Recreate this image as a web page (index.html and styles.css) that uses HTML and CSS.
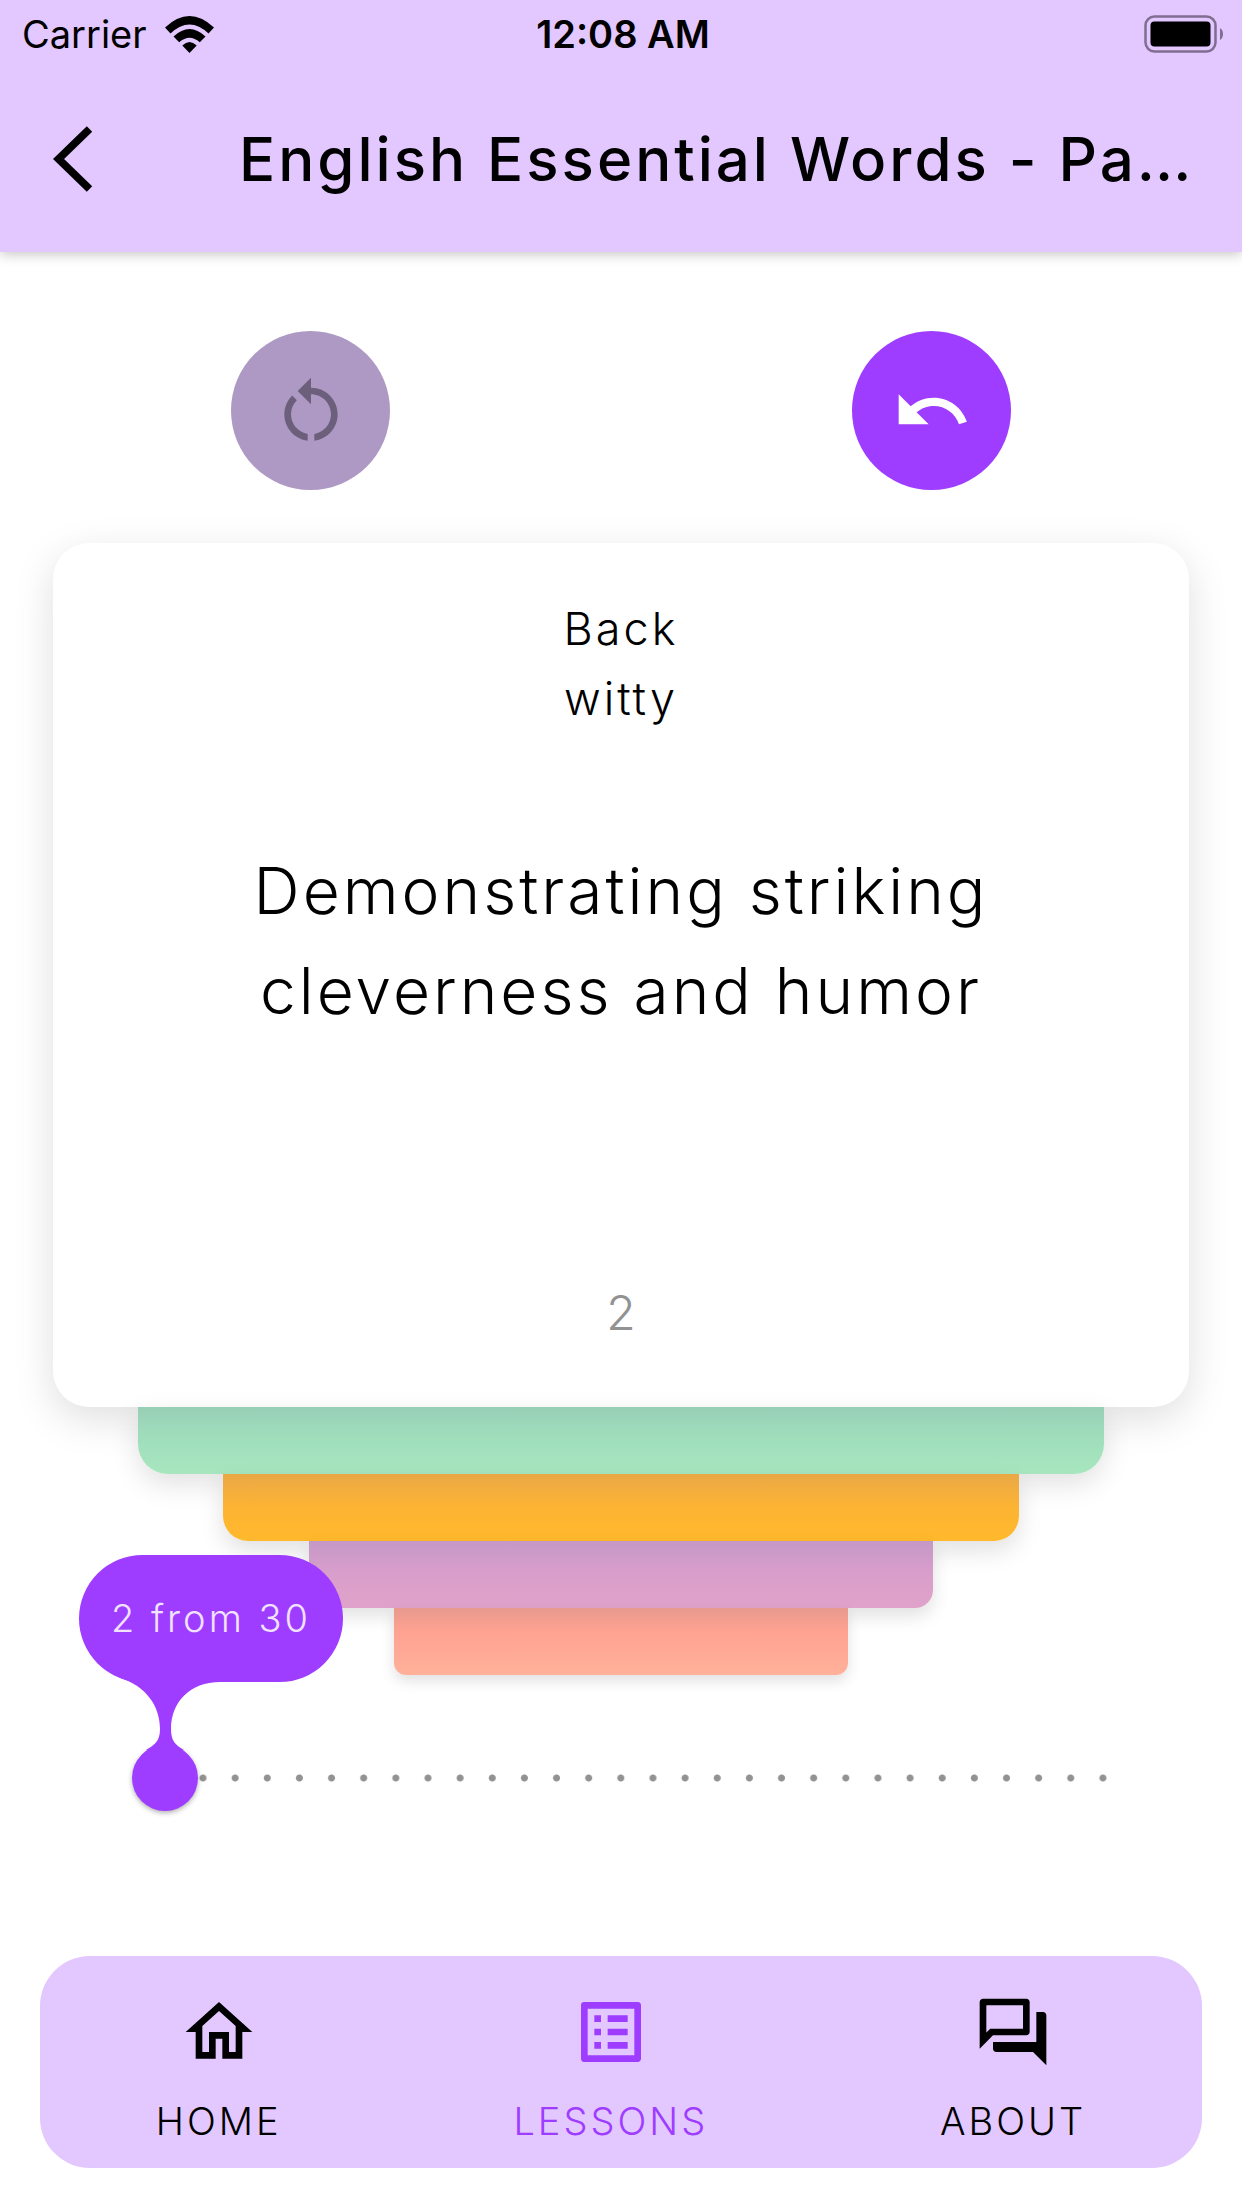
FILE: index.html
```html
<!DOCTYPE html>
<html lang="en">
<head>
<meta charset="utf-8">
<meta name="viewport" content="width=device-width, initial-scale=1">
<title>English Essential Words</title>
<link rel="stylesheet" href="styles.css">
</head>
<body>
<div class="app">
  <header class="header">
    <div class="status">
      <div class="carrier">
        <span>Carrier</span>
        <svg class="wifi" viewBox="0 0 49 37" aria-hidden="true">
          <path d="M0 11.500Q24.500-11.500 49 11.500L43.500 17.500Q24.500-.500 5.500 17.500Z"/>
          <path d="M8.500 20.500Q24.500 5.500 40.500 20.500L34.800 26.300Q24.500 17 14.200 26.300Z"/>
          <path d="M17.300 29.500Q24.500 22.500 31.700 29.500L24.500 37Z"/>
        </svg>
      </div>
      <time class="clock">12:08 AM</time>
      <svg class="battery" viewBox="0 0 80 38" aria-label="Battery full">
        <rect x="1.500" y="1.500" width="70" height="35" rx="9" fill="none" stroke="#7f6e90" stroke-width="2.500"/>
        <rect x="6.500" y="6.500" width="60" height="25" rx="4"/>
        <path d="M76 13q3 2 3 6t-3 6z" fill="#7f6e90"/>
      </svg>
    </div>
    <div class="toolbar">
      <button class="back" type="button" aria-label="Back">
        <svg viewBox="0 0 38 64" aria-hidden="true"><path d="M35 3L5 32l30 29" fill="none" stroke="#000" stroke-width="7.500"/></svg>
      </button>
      <h1 class="title">English Essential Words - Pa…</h1>
    </div>
  </header>

  <main class="main">
    <div class="actions">
      <button class="round" type="button" aria-label="Restart" disabled>
        <svg viewBox="0 0 24 24" aria-hidden="true"><path d="M12 5V2L8 6l4 4V7c3.310 0 6 2.690 6 6 0 2.970-2.170 5.430-5 5.910v2.020c3.950-.490 7-3.850 7-7.930 0-4.420-3.580-8-8-8zM6 13c0-1.650.670-3.150 1.760-4.240L6.340 7.340C4.900 8.790 4 10.790 4 13c0 4.080 3.050 7.440 7 7.930v-2.020C8.170 18.430 6 15.970 6 13z"/></svg>
      </button>
      <button class="round" type="button" aria-label="Undo">
        <svg viewBox="0 0 24 24" aria-hidden="true"><path d="M12.500 8c-2.650 0-5.050.990-6.900 2.600L2 7v9h9l-3.620-3.620c1.390-1.160 3.160-1.880 5.120-1.880 3.540 0 6.550 2.310 7.600 5.500l2.370-.780C21.080 11.030 17.150 8 12.500 8z"/></svg>
      </button>
    </div>

    <section class="deck">
      <article class="card">
        <p class="side">Back</p>
        <p class="side">witty</p>
        <p class="meaning">Demonstrating striking cleverness and humor</p>
        <p class="number">2</p>
      </article>
      <div class="layer green"></div>
      <div class="layer orange"></div>
      <div class="layer pink"></div>
      <div class="layer salmon"></div>
    </section>

    <div class="slider">
      <div class="dots"></div>
      <input class="range" id="progress" type="range" min="1" max="30" value="2" aria-label="Card">
      <output class="bubble" for="progress">2 from 30
        <svg class="neck" viewBox="0 0 100 80" aria-hidden="true"><path d="M0 0H100V6C70 6 51 26 51 53C51 66 56 69 64 74L45 80L26 74C34 69 40 66 40 53C40 30 26 10 0 2Z"/></svg>
      </output>
    </div>
  </main>

  <nav class="nav">
    <a class="tab" href="#home">
      <svg viewBox="0 0 24 24" aria-hidden="true"><path d="M12 5.690l5 4.500V18h-2v-6H9v6H7v-7.810l5-4.500M12 3L2 12h3v8h6v-6h2v6h6v-8h3L12 3z"/></svg>
      <span>HOME</span>
    </a>
    <a class="tab active" href="#lessons" aria-current="page">
      <svg viewBox="0 0 24 24" aria-hidden="true"><path d="M11 7h6v2h-6zM11 11h6v2h-6zM11 15h6v2h-6zM7 7h2v2H7zM7 11h2v2H7zM7 15h2v2H7zM20.100 3H3.900c-.500 0-.900.400-.900.900v16.200c0 .400.400.900.900.900h16.200c.400 0 .900-.500.900-.900V3.900c0-.500-.500-.900-.900-.900zM19 19H5V5h14v14z"/></svg>
      <span>LESSONS</span>
    </a>
    <a class="tab" href="#about">
      <svg viewBox="0 0 24 24" aria-hidden="true"><path d="M15 4v7H5.170L4 12.170V4h11m1-2H3c-.550 0-1 .450-1 1v14l4-4h10c.550 0 1-.450 1-1V3c0-.550-.450-1-1-1zm5 4h-2v9H6v2c0 .550.450 1 1 1h11l4 4V7c0-.550-.450-1-1-1z"/></svg>
      <span>ABOUT</span>
    </a>
  </nav>
</div>
</body>
</html>
```
FILE: styles.css
```css
* {
  box-sizing: border-box;
}

body {
  margin: 0;
  background: #fff;
  color: #000;
  font-family: Inter, "Liberation Sans", sans-serif;
}

p,
h1 {
  margin: 0;
}

button {
  border: 0;
  padding: 0;
  cursor: pointer;
}

svg {
  display: block;
}

.app {
  display: flex;
  flex-direction: column;
  min-height: 100vh;
}

/* Header */
.header {
  background: #e3c7ff;
  box-shadow: 0 2px 12px rgba(0, 0, 0, 0.24);
}

.status {
  display: grid;
  grid-template-columns: 1fr auto 1fr;
  align-items: center;
  height: 68px;
  padding: 0 18px 0 22px;
  font-size: 38px;
  line-height: 48px;
}

.carrier {
  display: flex;
  align-items: center;
  gap: 18px;
}

.wifi {
  width: 49px;
  height: 37px;
}

.clock {
  font-weight: 600;
}

.battery {
  justify-self: end;
  width: 80px;
  height: 38px;
}

.toolbar {
  display: flex;
  align-items: center;
  gap: 146px;
  height: 184px;
  padding: 0 48px 2px 53px;
}

.back {
  background: none;
}

.back svg {
  width: 40px;
  height: 66px;
}

.title {
  flex: 1;
  min-width: 0;
  font-size: 60px;
  font-weight: 500;
  line-height: 80px;
  letter-spacing: 3px;
  white-space: nowrap;
}

/* Round action buttons */
.main {
  flex: 1;
}

.actions {
  display: grid;
  grid-template-columns: 1fr 1fr;
  justify-items: center;
  padding: 79px 0 53px;
}

.round {
  display: grid;
  place-items: center;
  width: 159px;
  height: 159px;
  border-radius: 50%;
  background: #9e3cff;
  fill: #fff;
}

.round:disabled {
  background: #ad99c4;
  fill: #6c5f7b;
}

.round svg,
.tab svg {
  width: 80px;
  height: 80px;
}

/* Flash card and the layers under it */
.deck {
  display: flex;
  flex-direction: column;
  align-items: center;
  padding: 0 53px;
}

.card {
  display: flex;
  flex-direction: column;
  align-items: center;
  position: relative;
  width: 100%;
  min-height: 864px;
  padding: 51px 120px 59px;
  border-radius: 36px;
  background: #fff;
  box-shadow: 0 12px 40px rgba(0, 0, 0, 0.13);
  text-align: center;
}

.side {
  font-size: 45px;
  font-weight: 300;
  line-height: 70px;
  letter-spacing: 3px;
}

.meaning {
  max-width: 800px;
  margin-top: 107px;
  font-size: 64px;
  font-weight: 300;
  line-height: 100px;
  letter-spacing: 3px;
}

.number {
  margin-top: auto;
  color: #929292;
  font-size: 48px;
  font-weight: 300;
  line-height: 70px;
}

.layer {
  position: relative;
  height: 67px;
}

.green {
  width: 85%;
  border-radius: 0 0 30px 30px;
  background: linear-gradient(#98cfb7, #a0dfbc 50%, #a7e6be);
  box-shadow: 0 10px 28px rgba(0, 0, 0, 0.12);
}

.orange {
  width: 70%;
  border-radius: 0 0 25px 25px;
  background: linear-gradient(#e9a846, #fdb433 50%, #ffb92c);
  box-shadow: 0 10px 24px rgba(0, 0, 0, 0.12);
}

.pink {
  width: 55%;
  border-radius: 0 0 18px 18px;
  background: linear-gradient(#c498c6, #d89ecb 45%, #e0a2c9);
  box-shadow: 0 8px 18px rgba(0, 0, 0, 0.12);
}

.salmon {
  width: 40%;
  border-radius: 0 0 12px 12px;
  background: linear-gradient(#e8998e, #ffa292 35%, #ffb19a);
  box-shadow: 0 6px 14px rgba(0, 0, 0, 0.12);
}

/* Progress slider */
.slider {
  display: grid;
  align-items: center;
  position: relative;
  margin: 70px 0 60px;
}

.dots,
.range {
  grid-area: 1 / 1;
}

.dots {
  height: 8px;
  margin: 0 123px 0 187px;
  background: radial-gradient(circle, #929292 3px, transparent 4px) space;
  background-size: 32px 8px;
}

.range {
  appearance: none;
  height: 66px;
  margin: 0 142px 0 100px;
  background: none;
}

.range::-webkit-slider-thumb {
  appearance: none;
  width: 66px;
  height: 66px;
  border-radius: 50%;
  background: #9e3cff;
  box-shadow: 0 2px 5px rgba(0, 0, 0, 0.3);
}

.bubble {
  position: absolute;
  bottom: 129px;
  left: 79px;
  width: 264px;
  height: 127px;
  border-radius: 64px;
  background: #9e3cff;
  color: #f1e2ff;
  font-size: 38px;
  font-weight: 300;
  line-height: 127px;
  text-align: center;
  letter-spacing: 3px;
}

.neck {
  position: absolute;
  top: 121px;
  left: 41px;
  width: 100px;
  height: 80px;
  fill: #9e3cff;
}

/* Bottom navigation */
.nav {
  display: flex;
  justify-content: space-around;
  margin: 0 40px 40px;
  padding: 36px 0 23px;
  border-radius: 50px;
  background: #e3c7ff;
}

.tab {
  display: flex;
  flex-direction: column;
  align-items: center;
  gap: 25px;
  color: #000;
  fill: currentColor;
  font-size: 38px;
  font-weight: 300;
  line-height: 48px;
  letter-spacing: 3px;
  text-decoration: none;
}

.active {
  color: #9e3cff;
}
```
